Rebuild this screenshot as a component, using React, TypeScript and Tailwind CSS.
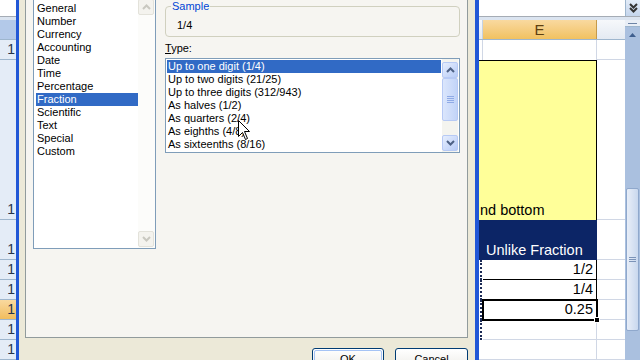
import React from "react";

const cats = ["General","Number","Currency","Accounting","Date","Time","Percentage","Fraction","Scientific","Text","Special","Custom"];
const types = ["Up to one digit (1/4)","Up to two digits (21/25)","Up to three digits (312/943)","As halves (1/2)","As quarters (2/4)","As eighths (4/8)","As sixteenths (8/16)"];

function Chev({ up, color }: { up?: boolean; color: string }) {
  return (
    <svg width="9" height="6" viewBox="0 0 9 6">
      <path d={up ? "M1 5 L4.5 1.5 L8 5" : "M1 1 L4.5 4.5 L8 1"} fill="none" stroke={color} strokeWidth="2" />
    </svg>
  );
}

function XpBtn({ up, disabled }: { up?: boolean; disabled?: boolean }) {
  return disabled ? (
    <div className="h-[16px] w-[16px] rounded-[2px] border border-[#e3e2da] bg-[#f4f3ee] flex items-center justify-center">
      <Chev up={up} color="#c9c8c0" />
    </div>
  ) : (
    <div className="h-[16px] w-[16px] rounded-[2px] border border-[#b7caf5] bg-gradient-to-br from-[#e6eefd] to-[#b8ccf7] flex items-center justify-center">
      <Chev up={up} color="#4d6185" />
    </div>
  );
}

function RowHead({ h, sel }: { h: string; sel?: boolean }) {
  return (
    <div className={`${h} flex items-end justify-end border-b border-[#9eb6ce] ${sel ? "bg-gradient-to-b from-[#f9d99f] to-[#f1bd5c]" : "bg-[#e4ecf7]"}`}>
      <span className="text-[14px] leading-[19px] text-[#27344a] pr-[1px]">1</span>
    </div>
  );
}

export default function App() {
  return (
    <div className="relative w-[640px] h-[360px] overflow-hidden flex bg-white font-['Liberation_Sans',Arial,sans-serif]">
      {/* row headers */}
      <div className="w-[16px] shrink-0 flex flex-col">
        <div className="h-[17px] bg-white border-b border-[#a5acb5]" />
        <div className="h-[3px] bg-[#dbe4f0]" />
        <div className="h-[20px] bg-[#b3c9e9] border-b border-[#9eb6ce]" />
        <RowHead h="h-[20px]" />
        <RowHead h="h-[160px]" />
        <RowHead h="h-[40px]" />
        <RowHead h="h-[20px]" />
        <RowHead h="h-[20px]" />
        <RowHead h="h-[20px]" sel />
        <RowHead h="h-[20px]" />
        <RowHead h="h-[20px]" />
      </div>

      {/* dialog */}
      <div className="w-[463px] shrink-0 border-l-[3px] border-r-[4px] border-[#2157d6] bg-[#ece9d8] pl-[6px] pr-[7px] flex flex-col">
        <div className="h-[338px] shrink-0 border-x border-b border-[#919b9c] bg-[#f6f5f1] flex pl-[7px] pr-[7px] gap-[9px] text-[11px] leading-[13px] text-black">
          {/* category list */}
          <div className="w-[123px] h-[249px] border-x border-b border-[#7f9db9] bg-white flex">
            <div className="flex-1 pt-[2px]">
              {cats.map((c) => (
                <div key={c} className={`h-[13px] ml-[2px] pl-[1px] whitespace-nowrap ${c === "Fraction" ? "bg-[#316ac5] text-white" : ""}`}>{c}</div>
              ))}
            </div>
            <div className="w-[17px] flex flex-col justify-between bg-[#fcfcfa] pb-[1px]">
              <div className="-mt-[1px]"><XpBtn up disabled /></div>
              <XpBtn disabled />
            </div>
          </div>

          {/* right column */}
          <div className="w-[295px] flex flex-col">
            <div className="relative mt-[6px] h-[31px] border border-[#d0d0bf] rounded-[4px] pl-[11px] pt-[12px]">
              <span className="absolute left-[5px] -top-[7px] px-[1px] bg-[#f6f5f1] text-[#0046d5]">Sample</span>
              1/4
            </div>
            <div className="mt-[5px]"><span className="underline">T</span>ype:</div>
            <div className="mt-[3px] h-[95px] border border-[#7f9db9] bg-white flex">
              <div className="flex-1 pt-[1px]">
                {types.map((t, i) => (
                  <div key={t} className={`h-[13px] ml-[1px] mr-[1px] pl-[1px] whitespace-nowrap ${i === 0 ? "bg-[#316ac5] text-white" : ""}`}>{t}</div>
                ))}
              </div>
              <div className="w-[16px] mr-[1px] flex flex-col bg-[#f4f4ef] pt-[3px] pb-[1px]">
                <XpBtn up />
                <div className="h-[43px] rounded-[2px] border border-[#b7caf5] bg-gradient-to-r from-[#dbe6fc] to-[#c2d4f8] flex flex-col items-center justify-center gap-[1px]">
                  <div className="w-[7px] h-[1px] bg-[#8faae6]" />
                  <div className="w-[7px] h-[1px] bg-[#8faae6]" />
                  <div className="w-[7px] h-[1px] bg-[#8faae6]" />
                  <div className="w-[7px] h-[1px] bg-[#8faae6]" />
                </div>
                <div className="flex-1" />
                <XpBtn />
              </div>
            </div>
          </div>
        </div>

        <div className="flex justify-end gap-[11px] mt-[10px] text-[11px] text-black">
          <div className="w-[72px] h-[23px] rounded-[3px] border border-[#003c74] bg-gradient-to-b from-[#ffffff] to-[#ecebe6] p-[1px]">
            <div className="h-full rounded-[2px] border border-[#a5c3f5] flex items-center justify-center">OK</div>
          </div>
          <div className="w-[73px] h-[23px] rounded-[3px] border border-[#003c74] bg-gradient-to-b from-[#ffffff] to-[#ecebe6] flex items-center justify-center">Cancel</div>
        </div>
      </div>

      {/* sheet */}
      <div className="w-[161px] shrink-0 flex flex-col">
        <div className="h-[17px] flex border-b border-[#a5acb5]">
          <div className="flex-1 bg-white" />
          <div className="w-[15px] bg-gradient-to-b from-[#e3ecf8] to-[#c4d5ec] border-l border-[#9eb6ce] flex flex-col items-center justify-center -space-y-[2px]">
            <Chev color="#333" />
            <Chev color="#333" />
          </div>
        </div>
        <div className="h-[3px] bg-[#dbe4f0]" />
        <div className="flex-1 flex">
          <div className="w-[146px] flex flex-col text-[14.5px] leading-[17px]">
            {/* column headers */}
            <div className="h-[20px] flex border-b border-[#9eb6ce]">
              <div className="w-[4px] bg-gradient-to-b from-[#f6f8fb] to-[#e4eaf2] border-r border-[#c5d2e3]" />
              <div className="w-[114px] bg-gradient-to-b from-[#f9d99f] to-[#f1c15f] border-r border-[#c59a4b] flex items-center justify-center text-[15px] text-[#5e3f10]">E</div>
              <div className="w-[28px] bg-gradient-to-b from-[#f6f8fb] to-[#e4eaf2]" />
            </div>
            {/* row 1 */}
            <div className="h-[20px] flex">
              <div className="w-[4px] border-r border-[#d0d7e5]" />
              <div className="w-[114px] border-r border-[#d0d7e5]" />
              <div className="w-[28px] border-b border-[#d0d7e5]" />
            </div>
            {/* row 2 yellow */}
            <div className="h-[160px] flex">
              <div className="w-[118px] bg-[#ffff99] border-t border-r border-black flex items-end pl-[1px] pb-[1px] whitespace-nowrap text-black">nd bottom</div>
              <div className="w-[28px] border-b border-[#d0d7e5]" />
            </div>
            {/* row 3 navy */}
            <div className="h-[40px] flex">
              <div className="w-[118px] bg-[#0c2566] flex items-end pl-[7px] pb-[1px] whitespace-nowrap text-white">Unlike Fraction</div>
              <div className="w-[28px] border-b border-[#d0d7e5]" />
            </div>
            {["1/2", "1/4", "0.25"].map((v, i) => (
              <div key={v} className="h-[20px] flex">
                <div className="w-[4px] flex justify-start">
                  <div className="w-[2px] ml-[1px] h-full border-l-2 border-dotted border-[#1b2a55]" />
                </div>
                <div className="relative w-[114px] border-r border-b border-black flex items-center justify-end pr-[3px] text-black">
                  {v}
                  {i === 2 && (
                    <>
                      <div className="absolute -left-[1px] -top-[1px] w-[116px] h-[22px] border-2 border-black" />
                      <div className="absolute -right-[4px] -bottom-[4px] w-[6px] h-[6px] bg-black border border-white" />
                    </>
                  )}
                </div>
                <div className="w-[28px] border-b border-[#d0d7e5]" />
              </div>
            ))}
            <div className="h-[20px] flex">
              <div className="w-[4px] flex">
                <div className="w-[2px] ml-[1px] h-full border-l-2 border-dotted border-[#1b2a55]" />
              </div>
              <div className="w-[114px] border-r border-b border-[#d0d7e5]" />
              <div className="w-[28px] border-b border-[#d0d7e5]" />
            </div>
            <div className="h-[20px] flex">
              <div className="w-[4px] border-b border-[#d0d7e5]" />
              <div className="w-[114px] border-r border-b border-[#d0d7e5]" />
              <div className="w-[28px] border-b border-[#d0d7e5]" />
            </div>
          </div>
          {/* vertical scrollbar */}
          <div className="w-[15px] flex flex-col bg-[#aac0df]">
            <div className="h-[7px] bg-[#e9eef6] border-b border-[#9eb6ce] flex items-center justify-center">
              <div className="w-[9px] h-[1px] bg-[#6d84a6]" />
            </div>
            <div className="h-[15px] flex items-center justify-center">
              <svg width="7" height="4" viewBox="0 0 7 4"><path d="M0 4 L3.5 0 L7 4 Z" fill="#3f5f8f" /></svg>
            </div>
            <div className="h-[146px]" />
            <div className="h-[143px] mx-[1px] rounded-[2px] border border-[#8fa8cc] bg-gradient-to-r from-[#e8eef8] to-[#c9d8ee] flex flex-col items-center justify-center gap-[1px]">
              <div className="w-[7px] h-[1px] bg-[#7b93b8]" />
              <div className="w-[7px] h-[1px] bg-[#7b93b8]" />
              <div className="w-[7px] h-[1px] bg-[#7b93b8]" />
            </div>
          </div>
        </div>
      </div>

      {/* mouse cursor */}
      <svg className="absolute left-[238px] top-[120px]" width="13" height="21" viewBox="0 0 13 21">
        <path d="M0.5 0.5 L0.5 16.5 L4.5 12.5 L7.5 19.5 L9.5 18.5 L6.5 11.5 L11.5 11.5 Z" fill="white" stroke="black" strokeWidth="1" />
      </svg>
    </div>
  );
}
